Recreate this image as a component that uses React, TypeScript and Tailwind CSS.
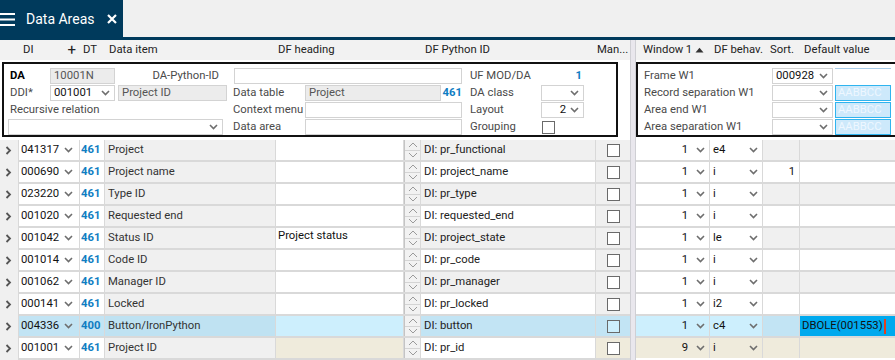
import React from 'react'

type Kind = 'odd' | 'even' | 'sel' | 'new'

type Row = {
  di: string
  dt: string
  item: string
  head?: string
  py: string
  win: string
  beh: string
  sort?: string
  def?: string
  kind: Kind
}

const rows: Row[] = [
  { di: '041317', dt: '461', item: 'Project', py: 'DI: pr_functional', win: '1', beh: 'e4', kind: 'odd' },
  { di: '000690', dt: '461', item: 'Project name', py: 'DI: project_name', win: '1', beh: 'i', sort: '1', kind: 'even' },
  { di: '023220', dt: '461', item: 'Type ID', py: 'DI: pr_type', win: '1', beh: 'i', kind: 'odd' },
  { di: '001020', dt: '461', item: 'Requested end', py: 'DI: requested_end', win: '1', beh: 'i', kind: 'even' },
  { di: '001042', dt: '461', item: 'Status ID', head: 'Project status', py: 'DI: project_state', win: '1', beh: 'le', kind: 'odd' },
  { di: '001014', dt: '461', item: 'Code ID', py: 'DI: pr_code', win: '1', beh: 'i', kind: 'even' },
  { di: '001062', dt: '461', item: 'Manager ID', py: 'DI: pr_manager', win: '1', beh: 'i', kind: 'odd' },
  { di: '000141', dt: '461', item: 'Locked', py: 'DI: pr_locked', win: '1', beh: 'i2', kind: 'even' },
  { di: '004336', dt: '400', item: 'Button/IronPython', py: 'DI: button', win: '1', beh: 'c4', def: 'DBOLE(001553)', kind: 'sel' },
  { di: '001001', dt: '461', item: 'Project ID', py: 'DI: pr_id', win: '9', beh: 'i', kind: 'new' },
]

// fundos por tipo de linha
const bgs: Record<Kind, Record<string, string>> = {
  odd: { sel: 'bg-white', dt: 'bg-white', item: 'bg-[#f0f0f0]', head: 'bg-white', py: 'bg-[#f0f0f0]', man: 'bg-[#f0f0f0]', win: 'bg-white', beh: 'bg-white', sort: 'bg-[#f0f0f0]', def: 'bg-[#f0f0f0]' },
  even: { sel: 'bg-white', dt: 'bg-white', item: 'bg-[#f0f0f0]', head: 'bg-white', py: 'bg-white', man: 'bg-[#f0f0f0]', win: 'bg-white', beh: 'bg-white', sort: 'bg-white', def: 'bg-white' },
  sel: { sel: 'bg-[#c2e4f4]', dt: 'bg-[#c2e4f4]', item: 'bg-[#bfe2f2]', head: 'bg-[#cdeffd]', py: 'bg-[#c2e4f4]', man: 'bg-[#c2e4f4]', win: 'bg-[#cdeffd]', beh: 'bg-[#cdeffd]', sort: 'bg-[#c2e4f4]', def: 'bg-[#00a9ee]' },
  new: { sel: 'bg-white', dt: 'bg-white', item: 'bg-[#f0f0f0]', head: 'bg-[#efebdc]', py: 'bg-white', man: 'bg-[#efebdc]', win: 'bg-[#efebdc]', beh: 'bg-[#efebdc]', sort: 'bg-[#efebdc]', def: 'bg-[#efebdc]' },
}

const Chev = () => (
  <svg width="9" height="6" viewBox="0 0 9 6" className="shrink-0">
    <path d="M1 1l3.5 3.5L8 1" fill="none" stroke="#6e6e6e" strokeWidth="1.6" />
  </svg>
)

const RowArrow = () => (
  <svg width="7" height="9" viewBox="0 0 7 9">
    <path d="M1.5 1l3.5 3.5L1.5 8" fill="none" stroke="#555" strokeWidth="1.8" />
  </svg>
)

const Spinner = () => (
  <div className="flex flex-col bg-[#f2f2f2] border-l border-[#c4c4c4]">
    <div className="flex-1 flex items-center justify-center border-b border-[#d4d4d4]">
      <svg width="10" height="6" viewBox="0 0 10 6">
        <path d="M1 5l4-4 4 4" fill="none" stroke="#9a9a9a" strokeWidth="1" />
      </svg>
    </div>
    <div className="flex-1 flex items-center justify-center">
      <svg width="10" height="6" viewBox="0 0 10 6">
        <path d="M1 1l4 4 4-4" fill="none" stroke="#9a9a9a" strokeWidth="1" />
      </svg>
    </div>
  </div>
)

const Check = ({ tint = false }: { tint?: boolean }) => (
  <div className={`w-[13px] h-[13px] border border-[#6a6a6a] ${tint ? 'bg-[#cdeffd]' : 'bg-white'}`} />
)

const LEFT_COLS = 'grid grid-cols-[18px_60px_24px_170px_127px_16px_174px_34px] gap-x-px'
const RIGHT_COLS = 'grid grid-cols-[73px_52px_36px_1fr] gap-x-px'
const BOX_COLS = 'grid grid-cols-[46px_65px_3px_109px_6px_72px_157px_8px_71px_43px] grid-rows-[16px_16px_16px_16px] gap-y-px'

function Input({ gray, children, className = '' }: { gray?: boolean; children?: React.ReactNode; className?: string }) {
  return (
    <div
      className={`h-[16px] border border-[#d3d3d3] flex items-center px-[3px] leading-none whitespace-nowrap ${
        gray ? 'bg-[#ececec] text-[#555]' : 'bg-white'
      } ${className}`}
    >
      {children}
    </div>
  )
}

function Select({ value, right, className = '' }: { value?: string; right?: boolean; className?: string }) {
  return (
    <div className={`h-[16px] border border-[#d3d3d3] bg-white flex items-center pl-[3px] pr-[4px] gap-[4px] leading-none ${className}`}>
      <span className={`flex-1 ${right ? 'text-right' : ''}`}>{value}</span>
      <Chev />
    </div>
  )
}

const Swatch = () => (
  <div className="h-[16px] bg-[#cde9fb] border border-[#2fb4ef] text-[#eef7ff] flex items-center pl-[2px] overflow-hidden">
    AABBCC
  </div>
)

export default function App() {
  return (
    <div className="w-[895px] h-[360px] overflow-hidden bg-white text-[11.3px] text-[#222] font-['Roboto',sans-serif] leading-none whitespace-nowrap">
      {/* aba */}
      <div className="flex h-[37px] bg-[#f0f0f0]">
        <div className="flex items-center w-[123px] bg-[#003a5c] text-white">
          <svg width="15" height="14" viewBox="0 0 15 14">
            <rect x="0" y="1" width="15" height="2" fill="#fff" />
            <rect x="0" y="6.5" width="15" height="2" fill="#fff" />
            <rect x="0" y="12" width="15" height="2" fill="#fff" />
          </svg>
          <span className="ml-[11px] text-[14px]">Data Areas</span>
          <svg width="10" height="10" viewBox="0 0 10 10" className="ml-[13px]">
            <path d="M1 1l8 8M9 1l-8 8" stroke="#fff" strokeWidth="2.2" />
          </svg>
        </div>
      </div>
      <div className="h-[3px] bg-[#003a5c]" />

      <div className="flex">
        {/* painel esquerdo */}
        <div className="w-[630px] shrink-0">
          <div className={`${LEFT_COLS} h-[20px] items-center bg-[#f2f2f2]`}>
            <div />
            <div className="flex items-center pl-[4px] pr-[3px]">
              <span className="flex-1">DI</span>
              <span className="text-[15px] leading-none">+</span>
            </div>
            <div className="pl-[3px]">DT</div>
            <div className="pl-[4px]">Data item</div>
            <div className="pl-[2px]">DF heading</div>
            <div />
            <div className="pl-[4px]">DF Python ID</div>
            <div className="pl-[1px]">Man...</div>
          </div>

          <div className="h-[80px] pt-[2px] pl-[2px] pr-[12px] bg-white">
            <div className="h-[75px] border-2 border-[#111] pt-[4px]">
              <div className={`${BOX_COLS} items-center text-[#4a4a4a]`}>
                <div className="pl-[6px] font-bold text-black">DA</div>
                <Input gray>10001N</Input>
                <div className="col-span-3 text-right pr-[14px]">DA-Python-ID</div>
                <Input className="col-span-2 ml-px" />
                <div />
                <div>UF MOD/DA</div>
                <div className="text-right pr-[2px] text-[#0f7dc2] font-bold">1</div>

                <div className="pl-[6px]">DDI*</div>
                <Select value="001001" className="text-[#111]" />
                <div />
                <Input gray>Project ID</Input>
                <div />
                <div>Data table</div>
                <div className="flex items-center">
                  <Input gray className="flex-1">Project</Input>
                  <span className="w-[21px] text-right text-[#0f7dc2] font-bold">461</span>
                </div>
                <div />
                <div>DA class</div>
                <Select />

                <div className="col-span-5 pl-[6px]">Recursive relation</div>
                <div>Context menu</div>
                <Input />
                <div />
                <div>Layout</div>
                <Select value="2" right className="text-[#111]" />

                <Select className="col-span-4 ml-[4px] mr-[4px]" />
                <div />
                <div>Data area</div>
                <Input />
                <div />
                <div>Grouping</div>
                <div className="pl-px">
                  <Check />
                </div>
              </div>
            </div>
          </div>

          <div className="flex">
            <div className="w-[18px] shrink-0 bg-[#f0f0f0] flex flex-col">
              {rows.map((r) => (
                <div key={r.di} className="h-[22px] pb-[2px] flex items-center justify-center pr-[2px]">
                  <RowArrow />
                </div>
              ))}
            </div>
            <div className="flex-1 bg-[#d9d9d9] pl-px">
              {rows.map((r) => {
                const b = bgs[r.kind]
                return (
                  <div key={r.di} className="grid grid-cols-[60px_24px_170px_127px_16px_174px_34px] gap-x-px h-[20px] mb-[2px]">
                    <div className={`${b.sel} flex items-center pl-[2px] pr-[6px] text-[#111]`}>
                      <span className="flex-1">{r.di}</span>
                      <Chev />
                    </div>
                    <div className={`${b.dt} flex items-center pl-[1px] font-bold text-[#0f7dc2]`}>{r.dt}</div>
                    <div className={`${b.item} flex items-center pl-[3px] text-[#333]`}>{r.item}</div>
                    <div className={`${b.head} pl-[2px] pt-[2px] text-[#111]`}>{r.head}</div>
                    <Spinner />
                    <div className={`${b.py} flex items-center pl-[3px] text-[#222]`}>{r.py}</div>
                    <div className={`${b.man} flex items-center justify-center`}>
                      <Check tint={r.kind === 'sel'} />
                    </div>
                  </div>
                )
              })}
            </div>
          </div>
        </div>

        {/* divisor */}
        <div className="w-[6px] shrink-0 bg-[#e9e7ed] border-x border-[#cfcfd4]" />

        {/* painel direito */}
        <div className="flex-1 min-w-0">
          <div className={`${RIGHT_COLS} h-[20px] items-center bg-[#f2f2f2]`}>
            <div className="flex items-center pl-[7px] pr-[5px]">
              <span className="flex-1">Window</span>
              <span>1</span>
              <svg width="9" height="6" viewBox="0 0 9 6" className="ml-[3px]">
                <path d="M0.5 5.5L4.5 0.8L8.5 5.5Z" fill="#333" />
              </svg>
            </div>
            <div className="pl-[4px]">DF behav.</div>
            <div className="pl-[7px]">Sort.</div>
            <div className="pl-[4px]">Default value</div>
          </div>

          <div className="h-[80px] pt-[2px] bg-white">
            <div className="h-[75px] border-2 border-r-0 border-[#111] pt-[4px] pr-[4px]">
              <div className="grid grid-cols-[134px_61px_2px_1fr] grid-rows-[16px_16px_16px_16px] gap-y-px items-center text-[#4a4a4a]">
                <div className="pl-[6px]">Frame W1</div>
                <Select value="000928" className="text-[#111]" />
                <div />
                <div className="h-[16px] border-t border-[#a8cce8]" />

                <div className="pl-[6px]">Record separation W1</div>
                <Select />
                <div />
                <Swatch />

                <div className="pl-[6px]">Area end W1</div>
                <Select />
                <div />
                <Swatch />

                <div className="pl-[6px]">Area separation W1</div>
                <Select />
                <div />
                <Swatch />
              </div>
            </div>
          </div>

          <div className="bg-[#d9d9d9]">
            {rows.map((r) => {
              const b = bgs[r.kind]
              return (
                <div key={r.di} className={`${RIGHT_COLS} h-[20px] mb-[2px]`}>
                  <div className={`${b.win} flex items-center justify-end gap-[8px] pr-[4px] text-[#111]`}>
                    <span>{r.win}</span>
                    <Chev />
                  </div>
                  <div className={`${b.beh} flex items-center pl-[3px] pr-[4px] text-[#111]`}>
                    <span className="flex-1">{r.beh}</span>
                    <Chev />
                  </div>
                  <div className={`${b.sort} flex items-center justify-end pr-[4px] text-[#111]`}>{r.sort}</div>
                  <div className={`${b.def} flex items-center pl-[2px] text-[#111]`}>
                    {r.def}
                    {r.def && <span className="w-[2px] h-[15px] bg-[#e2401c] ml-px" />}
                  </div>
                </div>
              )
            })}
          </div>
        </div>
      </div>
    </div>
  )
}
